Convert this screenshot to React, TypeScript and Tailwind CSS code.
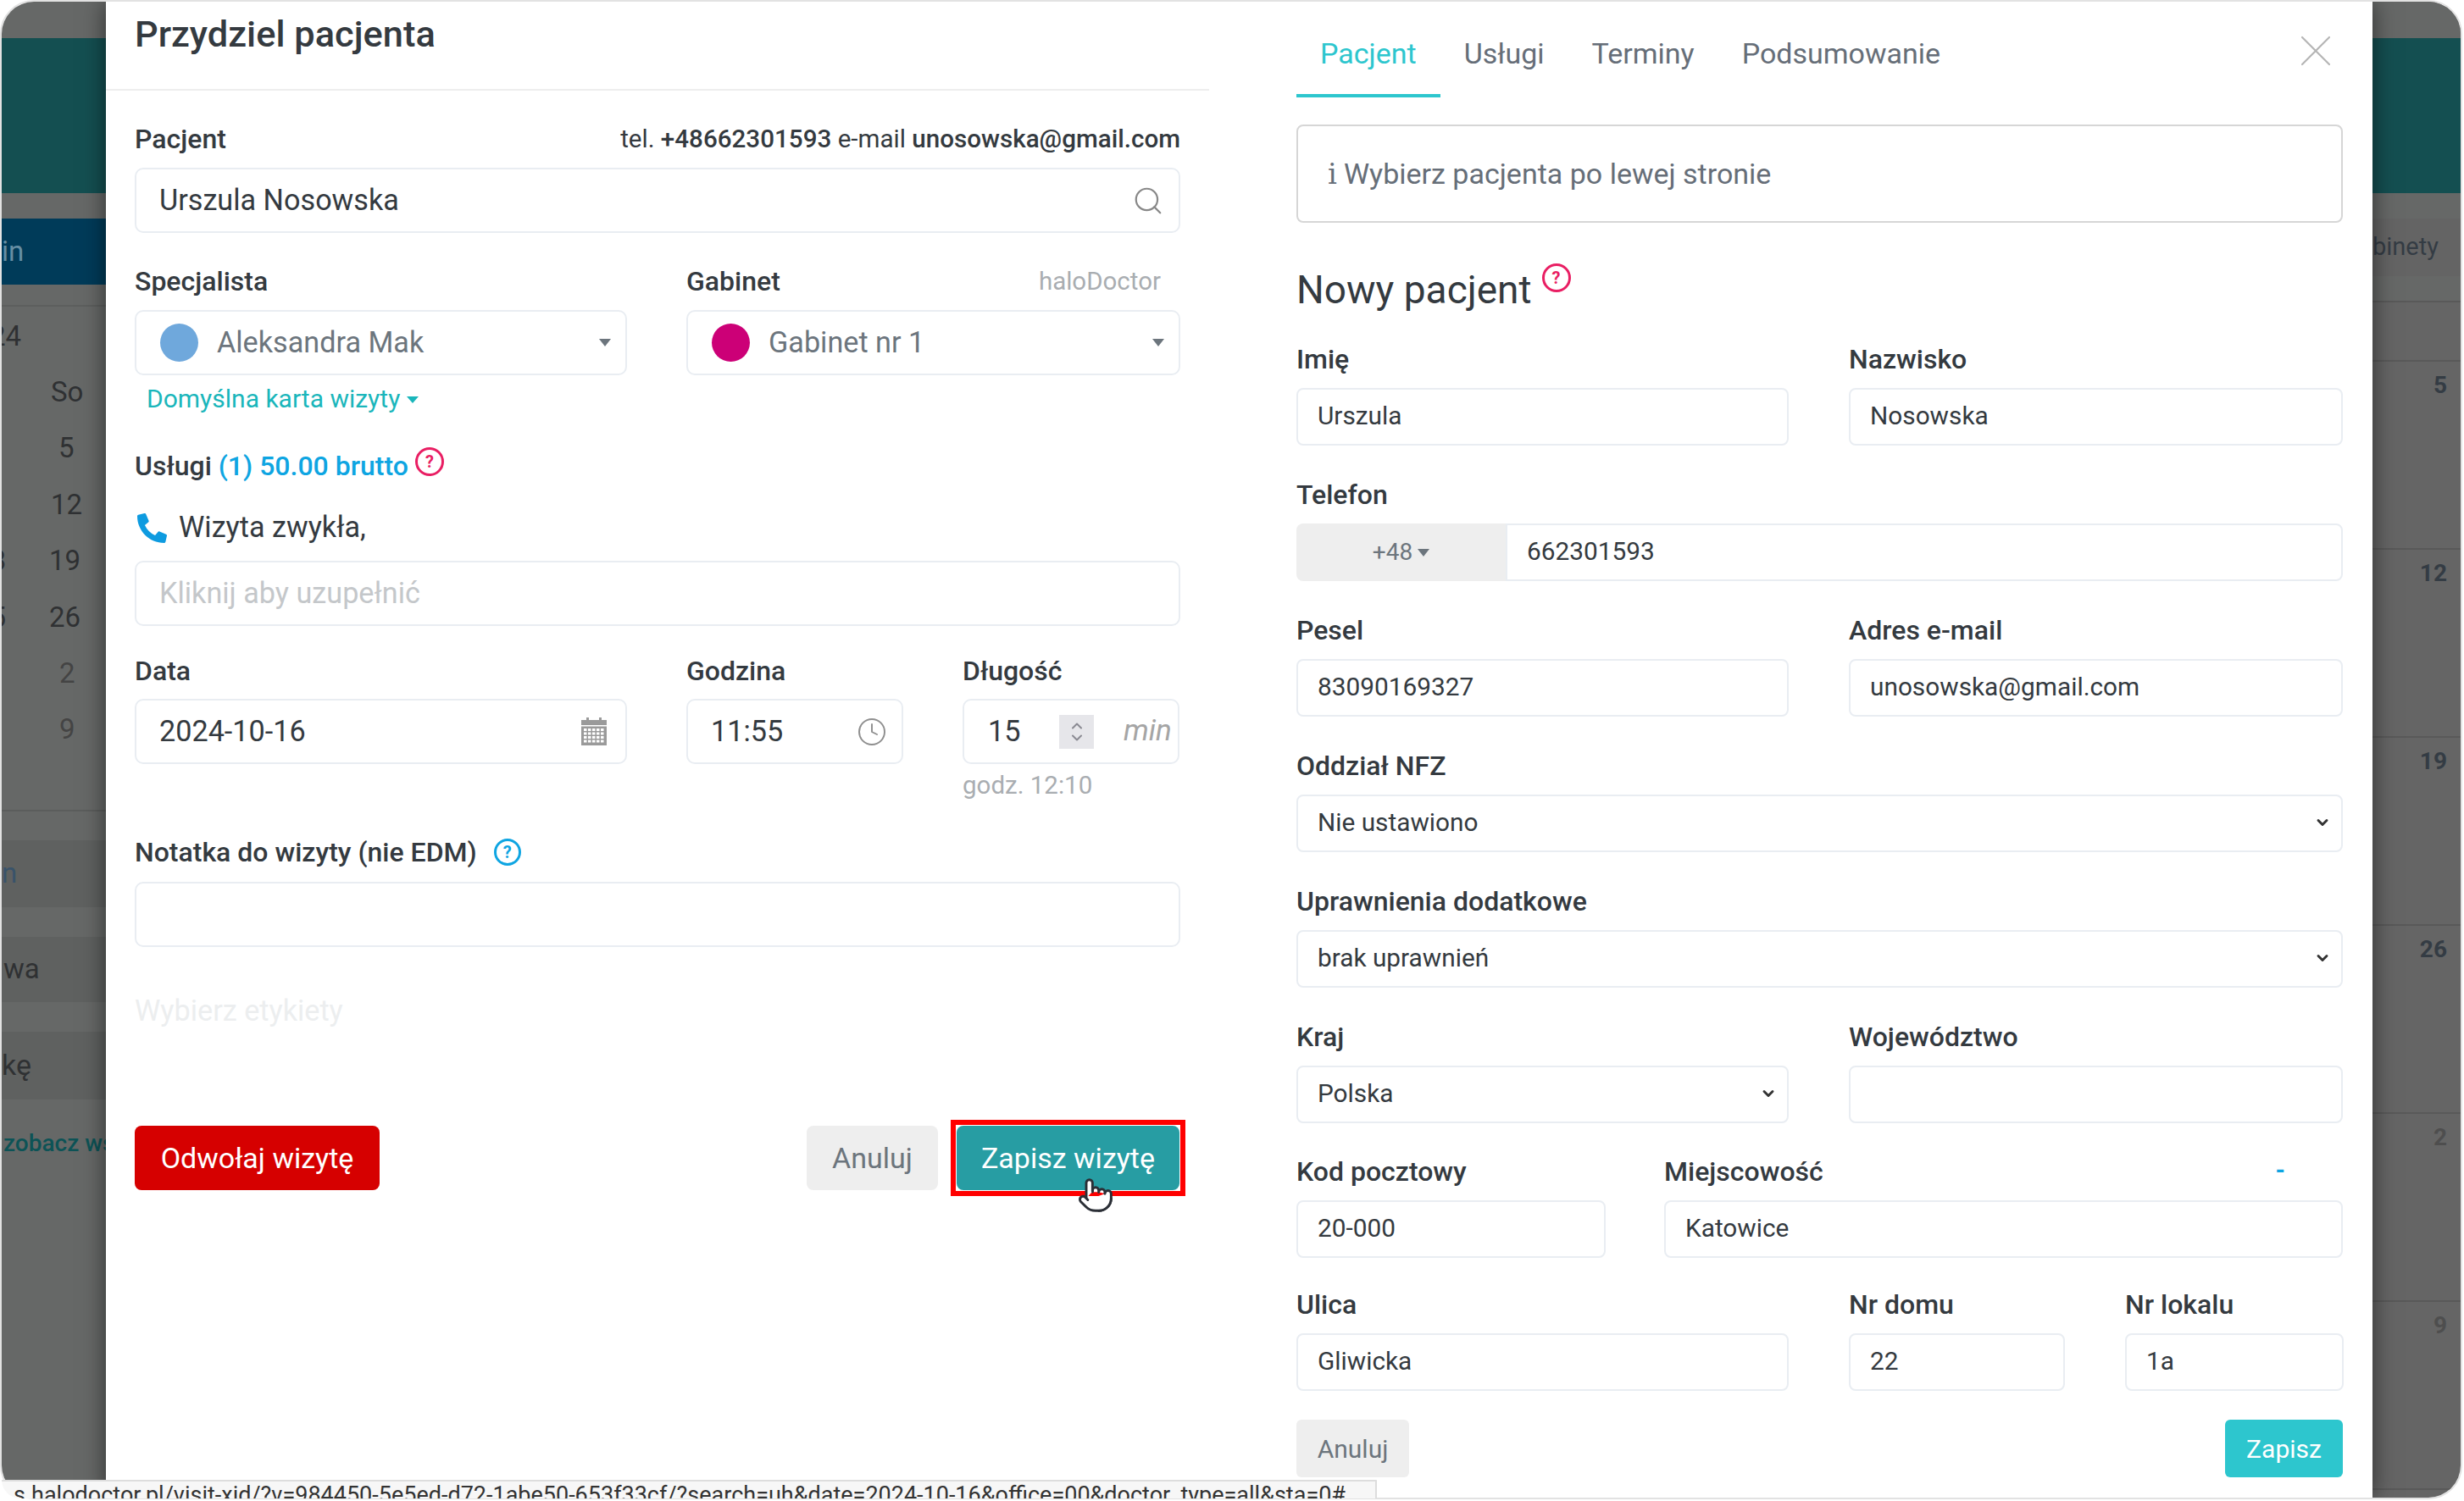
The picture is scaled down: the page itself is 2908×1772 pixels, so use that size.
import { ChevronDown, ChevronUp, Clock, Pointer, Search, X } from "lucide-react";
import { FaPhoneAlt } from "react-icons/fa";
import type { ReactNode } from "react";

function Label({ children, className = "" }: { children: ReactNode; className?: string }) {
  return <div className={`h-[34px] text-[32px] leading-[34px] font-medium text-[#343a40] ${className}`}>{children}</div>;
}

function Caret() {
  return <span className="h-0 w-0 border-x-[7px] border-t-[9px] border-x-transparent border-t-[#6c757d]" />;
}

function Help({ color, size, className = "" }: { color: string; size: string; className?: string }) {
  return (
    <span className={`flex items-center justify-center rounded-full border-[3px] font-bold text-[20px] leading-none ${color} ${size} ${className}`}>?</span>
  );
}

// duze pola po lewej stronie
function Box({ children, className = "" }: { children?: ReactNode; className?: string }) {
  return (
    <div className={`flex h-[77px] items-center rounded-[10px] border-2 border-[#e9edf2] bg-white pl-[27px] pr-[17px] text-[34.2px] text-[#343a40] ${className}`}>
      {children}
    </div>
  );
}

function Input({ value }: { value?: string }) {
  return (
    <div className="flex h-[68px] items-center rounded-[8px] border-2 border-[#e9edf2] bg-white px-[23px] pb-[2px] text-[29.8px] text-[#343a40]">{value}</div>
  );
}

function Select({ value }: { value: string }) {
  return (
    <div className="flex h-[68px] items-center justify-between rounded-[8px] border-2 border-[#e9edf2] bg-white pb-[2px] pl-[23px] pr-[12px] text-[29.8px] text-[#343a40]">
      {value}
      <ChevronDown size={20} strokeWidth={3.5} className="text-[#333]" />
    </div>
  );
}

function CalendarIcon() {
  const cells = [];
  for (let row = 0; row < 4; row++) {
    for (let col = 0; col < 5; col++) {
      cells.push(<rect key={`${row}-${col}`} x={4 + col * 5} y={13 + row * 4.5} width="3.5" height="3" fill="#fff" />);
    }
  }
  return (
    <svg width="32" height="33" viewBox="0 0 32 33" className="mr-[4px] shrink-0">
      <rect x="1" y="3" width="30" height="30" fill="#9a9a9a" />
      <rect x="7" y="0" width="3" height="6" fill="#9a9a9a" />
      <rect x="22" y="0" width="3" height="6" fill="#9a9a9a" />
      <rect x="1" y="9" width="30" height="1.5" fill="#fff" />
      {cells}
    </svg>
  );
}

function LeftPanel() {
  return (
    <div className="w-[1302px] shrink-0">
      <div className="flex h-[105px] border-b-2 border-[#eeeeee] px-[34px] pt-[16px] text-[43.4px] leading-[46px] font-medium text-[#343a40]">
        Przydziel pacjenta
      </div>
      <div className="px-[34px] pt-[40px]">
        <div className="flex items-center justify-between">
          <Label>Pacjent</Label>
          <div className="text-[29.6px] leading-[34px] text-[#343a40]">
            tel. <span className="font-medium">+48662301593</span> e-mail <span className="font-medium">unosowska@gmail.com</span>
          </div>
        </div>
        <Box className="mt-[17px] justify-between">
          Urszula Nosowska
          <Search size={38} strokeWidth={1.4} className="text-[#888]" />
        </Box>

        <div className="mt-[40px] grid grid-cols-[581px_583px] gap-x-[70px]">
          <div>
            <Label>Specjalista</Label>
            <Box className="mt-[17px] h-[76px] pl-[28px]">
              <span className="h-[45px] w-[45px] rounded-full bg-[#6fa8dc]" />
              <span className="ml-[22px] flex-1 text-[#6c757d]">Aleksandra Mak</span>
              <Caret />
            </Box>
            <div className="mt-[10px] flex h-[34px] items-center gap-[8px] pl-[14px] text-[30px] text-[#1ab6bb]">
              Domyślna karta wizyty
              <span className="mt-[4px] h-0 w-0 border-x-[7px] border-t-[8px] border-x-transparent border-t-[#1ab6bb]" />
            </div>
          </div>
          <div>
            <div className="flex justify-between pr-[23px]">
              <Label>Gabinet</Label>
              <span className="text-[29.5px] leading-[34px] text-[#a9adb1]">haloDoctor</span>
            </div>
            <Box className="mt-[17px] h-[76px] pl-[28px]">
              <span className="h-[45px] w-[45px] rounded-full bg-[#cc0077]" />
              <span className="ml-[22px] flex-1 text-[#6c757d]">Gabinet nr 1</span>
              <Caret />
            </Box>
          </div>
        </div>

        <div className="mt-[46px] flex h-[34px] items-center text-[32px] font-medium text-[#343a40]">
          Usługi&nbsp;<span className="text-[#0ea5e2]">(1) 50.00 brutto</span>
          <Help color="border-[#e91e63] text-[#e91e63]" size="h-[34px] w-[34px]" className="mb-[10px] ml-[8px]" />
        </div>
        <div className="mt-[39px] flex h-[34px] items-center text-[34.2px] text-[#343a40]">
          <FaPhoneAlt size={35} className="ml-[3px] mr-[14px] text-[#0e9be0]" />
          Wizyta zwykła,
        </div>
        <Box className="mt-[22px] h-[76px] text-[#c4c7ca]">Kliknij aby uzupełnić</Box>

        <div className="mt-[36px] grid grid-cols-[581px_256px_256px] gap-x-[70px]">
          <div>
            <Label>Data</Label>
            <Box className="mt-[16px] justify-between">
              2024-10-16
              <CalendarIcon />
            </Box>
          </div>
          <div>
            <Label>Godzina</Label>
            <Box className="mt-[16px] justify-between">
              11:55
              <Clock size={36} strokeWidth={1.3} className="text-[#8f8f8f]" />
            </Box>
          </div>
          <div>
            <Label>Długość</Label>
            <Box className="mt-[16px] pl-[28px] pr-0">
              <span className="w-[84px] shrink-0">15</span>
              <span className="flex h-[40px] w-[41px] shrink-0 flex-col items-center justify-center bg-[#e6e6ea] text-[#8a8a92]">
                <ChevronUp size={20} strokeWidth={2.4} className="-mb-[3px]" />
                <ChevronDown size={20} strokeWidth={2.4} className="-mt-[3px]" />
              </span>
              <span className="ml-[35px] shrink-0 text-[35px] italic text-[#a5a5a5]">min</span>
            </Box>
            <div className="mt-[8px] text-[29.5px] leading-[34px] text-[#a9adb1]">godz. 12:10</div>
          </div>
        </div>

        <div className="mt-[45px] flex h-[34px] items-center">
          <Label>Notatka do wizyty (nie EDM)</Label>
          <Help color="border-[#0ea5e2] text-[#0ea5e2]" size="h-[32px] w-[32px]" className="ml-[20px]" />
        </div>
        <Box className="mt-[18px]" />
        <div className="mt-[56px] text-[34.2px] leading-[38px] text-[#eceeef]">Wybierz etykiety</div>

        <div className="mt-[110px] flex items-center justify-between">
          <div className="flex h-[76px] w-[289px] items-center justify-center rounded-[8px] bg-[#d60000] text-[34px] text-white">Odwołaj wizytę</div>
          <div className="flex items-center gap-[15px]">
            <div className="flex h-[76px] w-[155px] items-center justify-center rounded-[8px] bg-[#eeeeee] text-[34px] text-[#6c757d]">Anuluj</div>
            <div className="-mr-[6px] border-[6px] border-[#ff0000] p-px">
              <div className="relative flex h-[76px] w-[263px] items-center justify-center rounded-[8px] bg-[#279da3] text-[34px] text-white">
                Zapisz wizytę
                <Pointer size={44} strokeWidth={1.6} className="absolute left-[142px] top-[60px] fill-white text-[#2b2f36]" />
              </div>
            </div>
          </div>
        </div>
      </div>
    </div>
  );
}

function RightPanel() {
  return (
    <div className="min-w-0 flex-1 pl-[103px] pr-[35px]">
      <div className="relative flex h-[113px] items-start text-[34px] text-[#666e78]">
        <div className="mt-[36px] h-[77px] border-b-[4px] border-[#2dc6ce] px-[28px] text-[#2dc6ce]">Pacjent</div>
        <div className="mt-[36px] px-[28px]">Usługi</div>
        <div className="mt-[36px] px-[28px]">Terminy</div>
        <div className="mt-[36px] px-[28px]">Podsumowanie</div>
        <X size={64} strokeWidth={0.8} className="absolute right-0 top-[26px] text-[#b5b5b5]" />
      </div>

      <div className="mt-[32px] flex h-[116px] items-center rounded-[8px] border-2 border-[#d6d6d6] pl-[35px] text-[34px] text-[#666e78]">
        <span className="mr-[8px] font-['DejaVu_Serif',serif] font-light">i</span>Wybierz pacjenta po lewej stronie
      </div>

      <div className="mt-[54px] flex h-[50px] text-[46px] leading-[50px] text-[#343a40]">
        Nowy pacjent
        <Help color="border-[#e91e63] text-[#e91e63]" size="h-[34px] w-[34px]" className="-mt-[6px] ml-[12px]" />
      </div>

      <div className="mt-[40px] grid grid-cols-[581px_583px] gap-x-[71px] gap-y-[41px]">
        <div className="flex flex-col gap-[17px]">
          <Label>Imię</Label>
          <Input value="Urszula" />
        </div>
        <div className="flex flex-col gap-[17px]">
          <Label>Nazwisko</Label>
          <Input value="Nosowska" />
        </div>

        <div className="col-span-2 flex flex-col gap-[17px]">
          <Label>Telefon</Label>
          <div className="flex h-[68px]">
            <div className="flex w-[247px] items-center justify-center gap-[6px] rounded-l-[8px] bg-[#eeeeee] text-[28px] text-[#6c757d]">
              +48
              <Caret />
            </div>
            <div className="flex flex-1 items-center rounded-r-[8px] border-2 border-[#e9edf2] pb-[2px] pl-[23px] text-[29.8px] text-[#343a40]">662301593</div>
          </div>
        </div>

        <div className="flex flex-col gap-[17px]">
          <Label>Pesel</Label>
          <Input value="83090169327" />
        </div>
        <div className="flex flex-col gap-[17px]">
          <Label>Adres e-mail</Label>
          <Input value="unosowska@gmail.com" />
        </div>

        <div className="col-span-2 flex flex-col gap-[17px]">
          <Label>Oddział NFZ</Label>
          <Select value="Nie ustawiono" />
        </div>
        <div className="col-span-2 flex flex-col gap-[17px]">
          <Label>Uprawnienia dodatkowe</Label>
          <Select value="brak uprawnień" />
        </div>

        <div className="flex flex-col gap-[17px]">
          <Label>Kraj</Label>
          <Select value="Polska" />
        </div>
        <div className="flex flex-col gap-[17px]">
          <Label>Województwo</Label>
          <Input />
        </div>
      </div>

      <div className="mt-[40px] grid grid-cols-[365px_801px] gap-x-[69px]">
        <div className="flex flex-col gap-[17px]">
          <Label>Kod pocztowy</Label>
          <Input value="20-000" />
        </div>
        <div className="flex flex-col gap-[17px]">
          <div className="flex justify-between pr-[68px]">
            <Label>Miejscowość</Label>
            <span className="text-[29px] leading-[30px] font-bold text-[#0ea5e2]">-</span>
          </div>
          <Input value="Katowice" />
        </div>
      </div>

      <div className="mt-[38px] grid grid-cols-[581px_255px_258px] gap-x-[71px]">
        <div className="flex flex-col gap-[17px]">
          <Label>Ulica</Label>
          <Input value="Gliwicka" />
        </div>
        <div className="flex flex-col gap-[17px]">
          <Label>Nr domu</Label>
          <Input value="22" />
        </div>
        <div className="flex flex-col gap-[17px]">
          <Label>Nr lokalu</Label>
          <Input value="1a" />
        </div>
      </div>

      <div className="mt-[34px] flex justify-between">
        <div className="flex h-[68px] w-[133px] items-center justify-center rounded-[6px] bg-[#eeeeee] text-[30px] text-[#6c757d]">Anuluj</div>
        <div className="flex h-[68px] w-[139px] items-center justify-center rounded-[6px] bg-[#2dc6ce] text-[30px] text-white">Zapisz</div>
      </div>
    </div>
  );
}

// to co widac pod modalem po lewej
function BackdropLeft() {
  const days = [
    { label: "So", prev: "", cls: "pl-[58px]" },
    { label: "5", prev: "", cls: "pl-[67px]" },
    { label: "12", prev: "", cls: "pl-[58px]" },
    { label: "19", prev: "18", cls: "pl-[56px]" },
    { label: "26", prev: "25", cls: "pl-[56px]" },
    { label: "2", prev: "", cls: "pl-[68px] text-[#444]" },
    { label: "9", prev: "", cls: "pl-[68px] text-[#444]" },
  ];
  return (
    <div className="w-[123px] shrink-0 overflow-hidden whitespace-nowrap bg-[#666867] text-[33px] text-[#2f3133]">
      <div className="h-[43px]" />
      <div className="h-[183px] bg-[#144f51]" />
      <div className="h-[30px]" />
      <div className="flex h-[78px] items-center bg-[#003b59] text-[#668ea3]">in</div>
      <div className="h-[26px] border-b-2 border-[#5d5f5e]" />
      <div className="-ml-[14px] mt-[17px] h-[36px] leading-[36px]">24</div>
      <div className="mt-[15px]">
        {days.map((d) => (
          <div key={d.label} className={`flex h-[66.4px] leading-[66.4px] ${d.cls}`}>
            {d.prev && <span className="-ml-[48px] w-[48px] -translate-x-[40px]">{d.prev}</span>}
            {d.label}
          </div>
        ))}
      </div>
      <div className="mt-[61px] h-[36px] border-t-2 border-[#5b5d5c]" />
      <div className="flex h-[79px] items-center bg-[#5f6160] text-[#39536a]">n</div>
      <div className="h-[35px]" />
      <div className="flex h-[77px] items-center bg-[#5f6160] pl-[2px]">wa</div>
      <div className="h-[35px]" />
      <div className="flex h-[80px] items-center bg-[#5f6160] text-[34px]">kę</div>
      <div className="mt-[35px] pl-[2px] text-[28px] leading-[34px] font-medium text-[#0d5356]">zobacz wszystko</div>
    </div>
  );
}

function BackdropRight() {
  const rows = ["5", "12", "19", "26", "2", "9"];
  return (
    <div className="flex min-w-0 flex-1 flex-col overflow-hidden whitespace-nowrap bg-[#656565] text-[#343c44]">
      <div className="h-[43px] shrink-0 bg-[#666867]" />
      <div className="h-[183px] shrink-0 bg-[#144f51]" />
      <div className="h-[30px] shrink-0 bg-[#666867]" />
      <div className="flex h-[68px] shrink-0 items-center bg-[#646464] text-[29px]">binety</div>
      <div className="h-[29px] shrink-0 bg-[#666867]" />
      <div className="h-[72px] shrink-0 border-y-2 border-[#595959]" />
      {rows.map((r, i) => (
        <div key={r} className={`h-[222px] shrink-0 border-b-2 border-[#595959] pr-[16px] pt-[10px] text-right text-[28px] leading-[36px] font-bold ${i > 3 ? "text-[#4e4e4e]" : ""}`}>
          {r}
        </div>
      ))}
    </div>
  );
}

export default function App() {
  return (
    <div className="relative h-[1772px] w-[2908px] overflow-hidden bg-white font-['Roboto',sans-serif]">
      <div className="h-[1770px] w-[2906px] overflow-hidden rounded-[40px] border-2 border-[#e2e2e2]">
        <div className="flex h-full">
          <BackdropLeft />
          <div className="relative z-10 flex h-full w-[2675px] shrink-0 bg-white shadow-[0_0_26px_rgba(0,0,0,0.55)]">
            <LeftPanel />
            <RightPanel />
          </div>
          <BackdropRight />
        </div>
      </div>
      <div className="absolute bottom-[3px] left-[2px] z-20 h-[22px] w-[1623px] overflow-hidden rounded-bl-[30px] rounded-tr-[2px] border-r-2 border-t-2 border-[#dddddd] bg-[#f7f7f7] pl-[14px] text-[27px] leading-[32px] whitespace-nowrap text-[#333]">
        s.halodoctor.pl/visit-xid/?v=984450-5e5ed-d72-1abe50-653f33cf/?search=uh&amp;date=2024-10-16&amp;office=00&amp;doctor_type=all&amp;sta=0#
      </div>
    </div>
  );
}
